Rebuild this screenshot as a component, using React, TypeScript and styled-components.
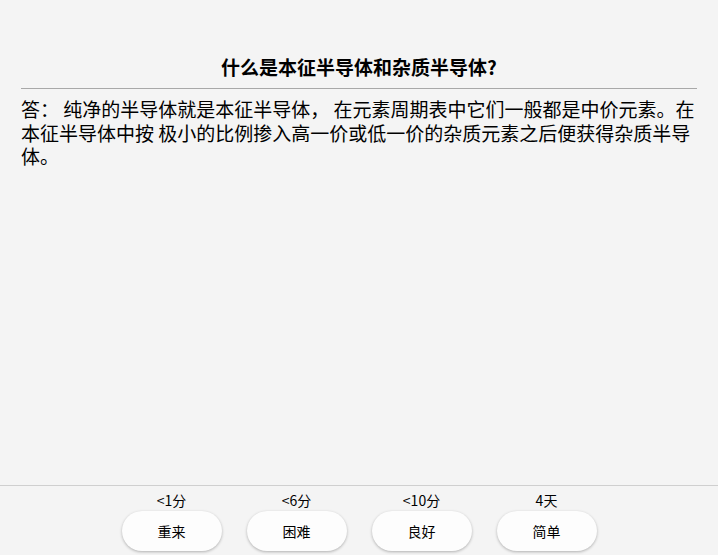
import styled, { createGlobalStyle } from "styled-components";

const GlobalStyle = createGlobalStyle`
    html, body {
        margin: 0;
        padding: 0;
        background: #f4f4f4;
        font-family: "Noto Sans CJK SC", "Noto Sans", sans-serif;
        color: #000;
    }
`;

const Page = styled.div`
    height: 555px;
    display: flex;
    flex-direction: column;
`;

const Card = styled.div`
    flex: 1;
    padding: 0 21px;
`;

const Question = styled.h1`
    margin: 54px 0 0;
    padding-bottom: 8px;
    text-align: center;
    font-size: 19px;
    font-weight: 700;
    line-height: 26px;
    border-bottom: 1px solid #a8a8a8;
`;

const Answer = styled.div`
    margin-top: 8px;
    font-size: 19px;
    line-height: 23.5px;
`;

const Footer = styled.div`
    border-top: 1px solid #cfcfcf;
    display: flex;
    justify-content: center;
    gap: 25px;
    padding: 4px 0 4px;
`;

const Choice = styled.div`
    width: 100px;
    display: flex;
    flex-direction: column;
    align-items: center;
    gap: 1px;
`;

const Interval = styled.div`
    font-size: 14px;
    line-height: 20px;
`;

const AnswerButton = styled.button`
    width: 100px;
    height: 40px;
    border: none;
    border-radius: 20px;
    background: #fdfdfd;
    box-shadow: 0 1px 3px rgba(0, 0, 0, 0.28);
    font-family: inherit;
    font-size: 14px;
    color: #000;
    cursor: pointer;
`;

const choices = [
    { interval: "<1分", label: "重来" },
    { interval: "<6分", label: "困难" },
    { interval: "<10分", label: "良好" },
    { interval: "4天", label: "简单" },
];

function App() {
    return (
        <Page>
            <GlobalStyle />
            <Card>
                <Question>什么是本征半导体和杂质半导体?</Question>
                <Answer>
                    答： 纯净的半导体就是本征半导体， 在元素周期表中它们一般都是中价元素。在本征半导体中按 极小的比例掺入高一价或低一价的杂质元素之后便获得杂质半导体。
                </Answer>
            </Card>
            <Footer>
                {choices.map(c => (
                    <Choice key={c.label}>
                        <Interval>{c.interval}</Interval>
                        <AnswerButton>{c.label}</AnswerButton>
                    </Choice>
                ))}
            </Footer>
        </Page>
    );
}

export default App;
